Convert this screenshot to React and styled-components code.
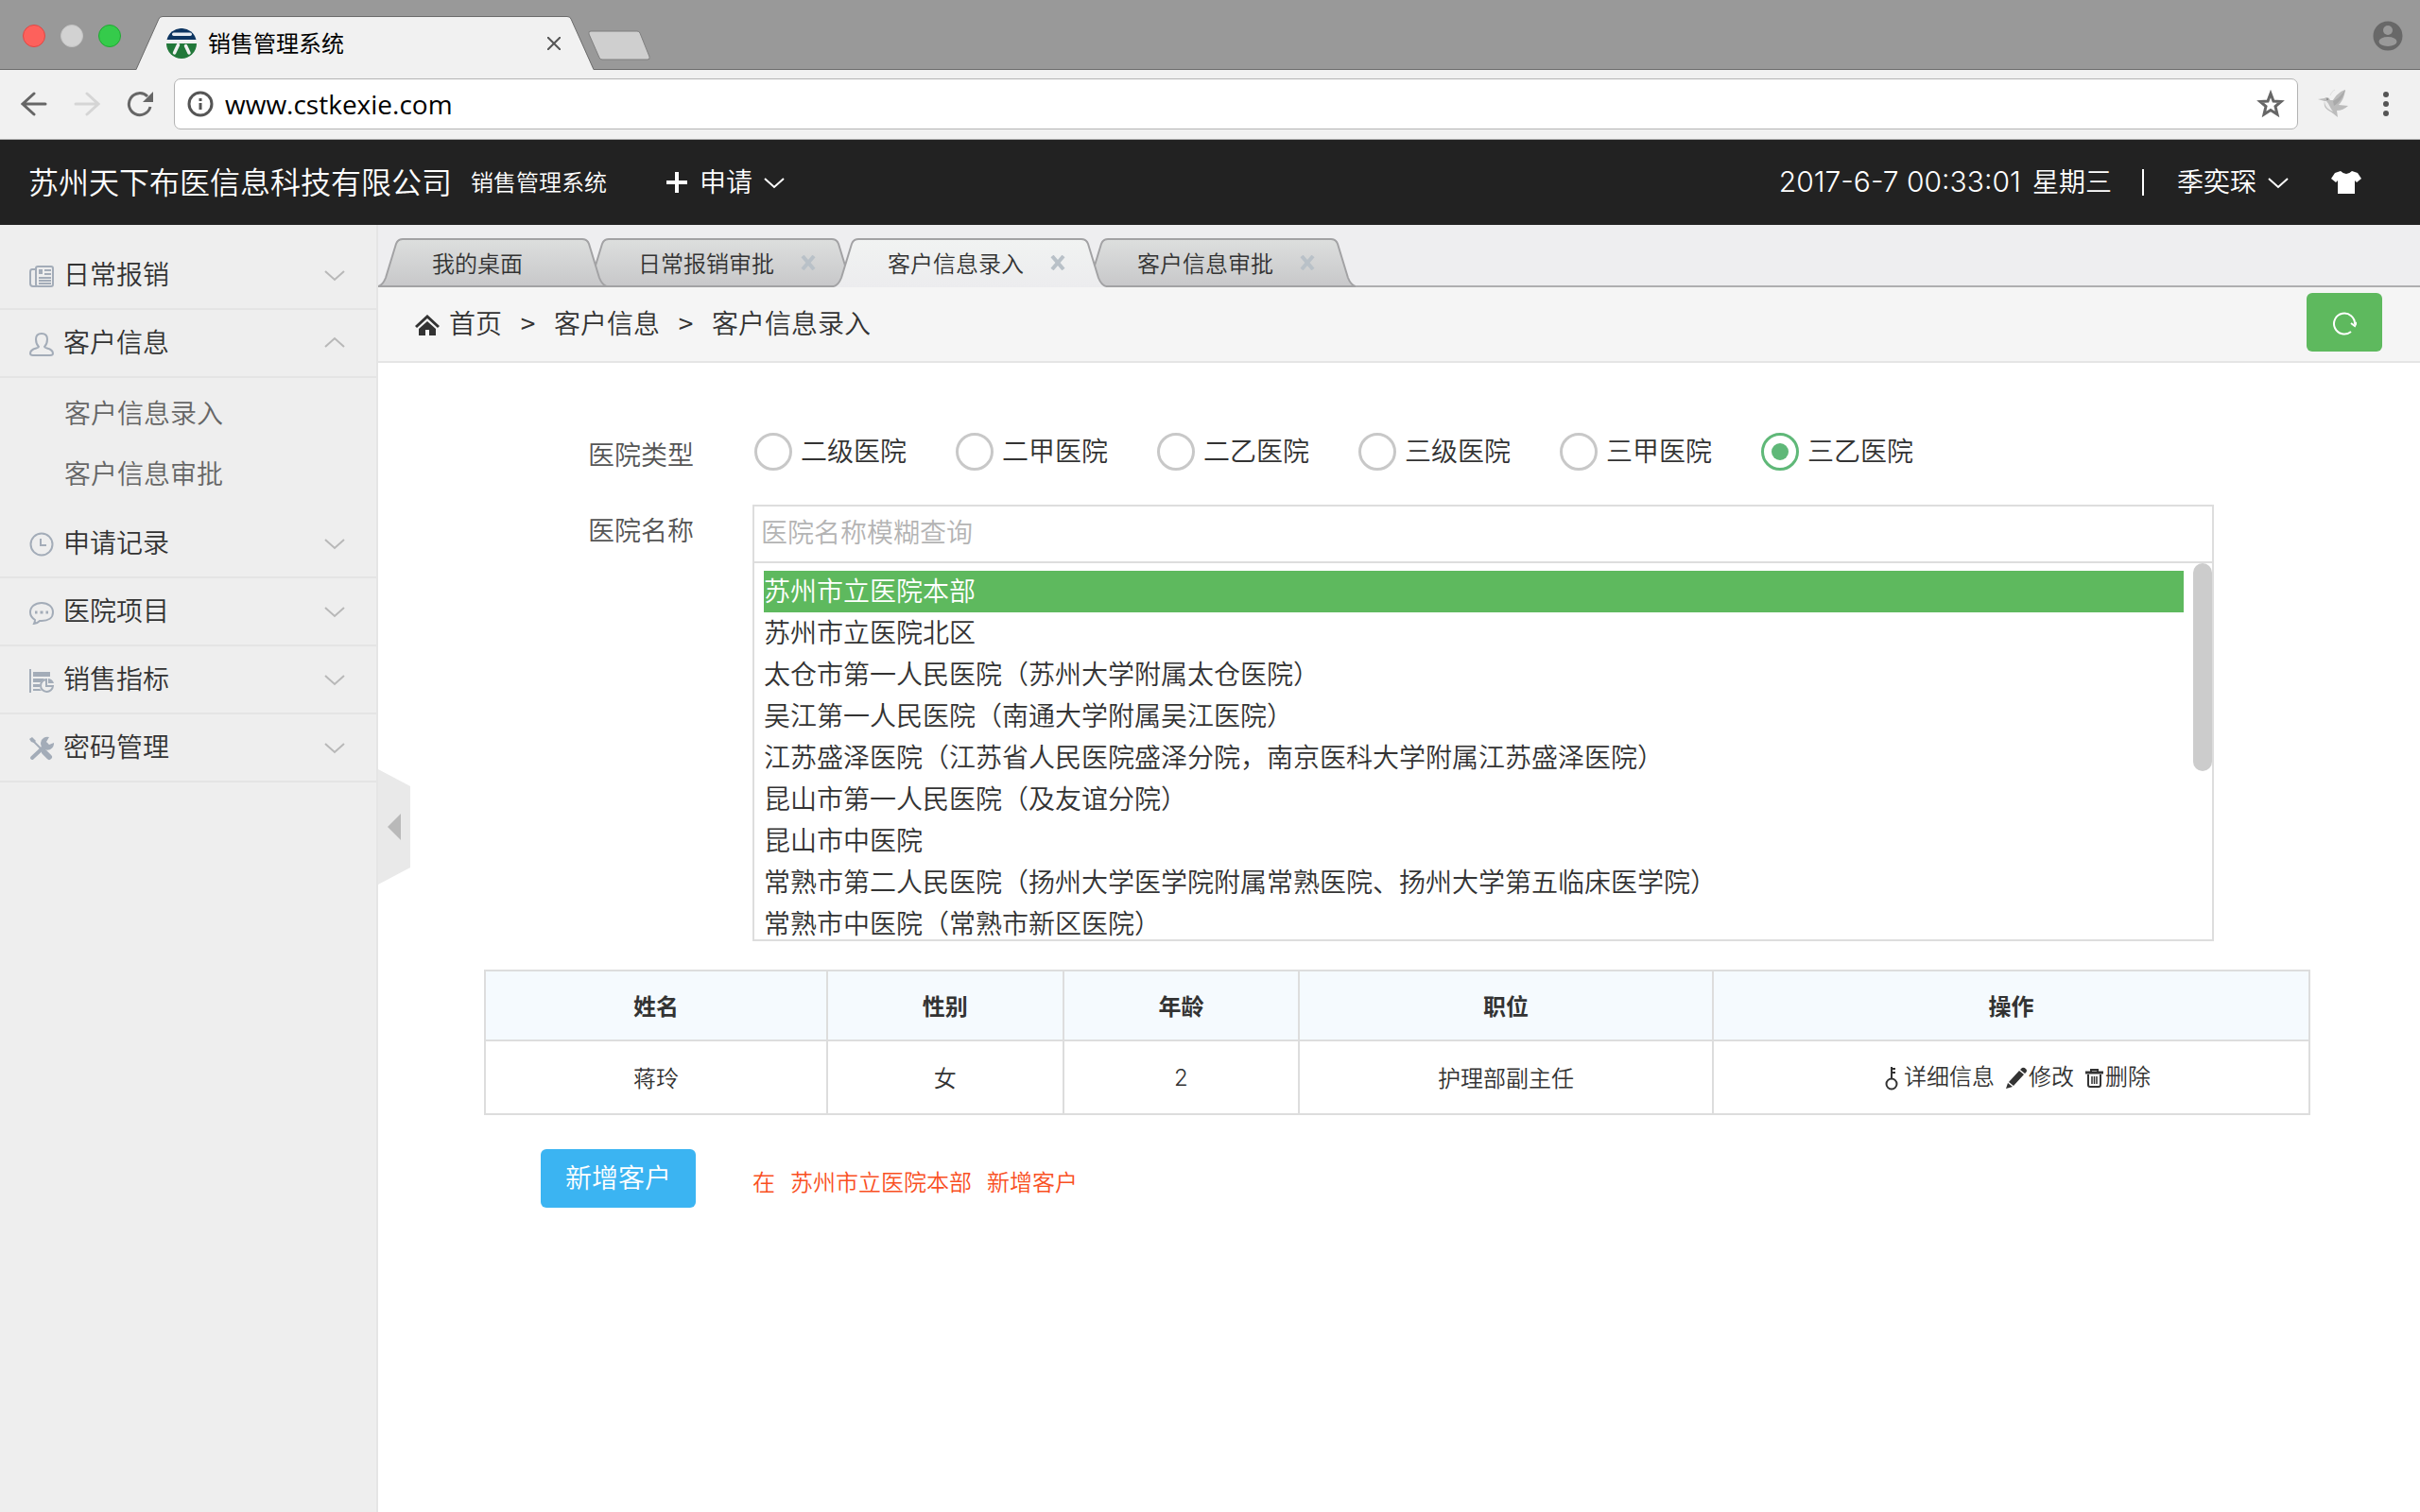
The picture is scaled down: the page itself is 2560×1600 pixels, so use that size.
import React, { useState } from "react";
import styled, { createGlobalStyle, css } from "styled-components";

const GlobalStyle = createGlobalStyle`
    * {
        box-sizing: border-box;
    }

    body {
        margin: 0;
        background: #ffffff;
        color: #333333;
        font-family: "Noto Sans CJK SC", sans-serif;
        font-size: 28px;
        font-weight: 350;
        line-height: 40px;
    }

    button, input {
        margin: 0;
        padding: 0;
        border: 0;
        background: none;
        color: inherit;
        font: inherit;
    }

    svg {
        display: block;
        flex: none;
    }
`;

/* ---------- browser window ---------- */

const TitleBar = styled.div`
    display: flex;
    align-items: flex-end;
    height: 74px;
    padding-left: 24px;
    background: #999999;
    box-shadow: inset 0 -1px 0 #6c6c6c;
`;

const Lights = styled.div`
    display: flex;
    gap: 16px;
    padding-bottom: 24px;
`;

const Light = styled.span`
    width: 24px;
    height: 24px;
    border: 1px solid ${props => props.$edge};
    border-radius: 50%;
    background: ${props => props.$fill};
`;

const BrowserTab = styled.div`
    position: relative;
    display: flex;
    align-items: center;
    width: 484px;
    height: 57px;
    margin-left: 16px;
    padding: 0 35px 0 32px;
    color: #000000;
    font-size: 24px;
    font-weight: 400;
    isolation: isolate;
`;

const TabBackground = styled.svg`
    position: absolute;
    top: 0;
    left: 0;
    z-index: -1;
`;

const BrowserTabTitle = styled.span`
    flex: 1;
    margin-left: 12px;
    padding-bottom: 2px;
`;

const NewTab = styled.button`
    margin-left: -6px;
    padding-bottom: 10px;
`;

const Profile = styled.button`
    margin: 0 18px 20px auto;
`;

const ToolBar = styled.div`
    display: flex;
    align-items: center;
    height: 74px;
    padding: 0 33px 1px 22px;
    border-bottom: 1px solid #a8a8a8;
    background: #f1f1f1;
`;

const NavButton = styled.button`
    margin-right: 28px;
    color: ${props => props.disabled ? "#d5d5d5" : "#666666"};
`;

const AddressBar = styled.div`
    display: flex;
    flex: 1;
    align-items: center;
    height: 54px;
    margin-left: -6px;
    padding: 0 13px;
    border: 1px solid #b3b3b3;
    border-radius: 7px;
    background: #ffffff;
`;

const AddressInput = styled.input`
    flex: 1;
    margin-left: 12px;
    outline: none;
    color: #000000;
    font-family: "Open Sans", sans-serif;
    font-weight: 400;
`;

const BirdButton = styled.button`
    margin: 0 36px 0 20px;
`;

/* ---------- application header ---------- */

const Header = styled.header`
    display: flex;
    align-items: center;
    height: 90px;
    padding: 0 62px 0 30px;
    background: #222222;
    color: #ffffff;
`;

const Company = styled.h1`
    margin: 0;
    padding-bottom: 4px;
    font-size: 32px;
    font-weight: inherit;
`;

const SystemName = styled.span`
    margin-left: 20px;
    padding-bottom: 2px;
    font-size: 24px;
`;

/* lifts a line of text to the optical middle of the icons beside it */
const Caption = styled.span`
    padding-bottom: 4px;
`;

const HeaderButton = styled.button`
    display: flex;
    align-items: center;
    gap: 12px;
`;

const ApplyButton = styled(HeaderButton)`
    margin-left: 62px;
`;

const Clock = styled.time`
    margin-left: auto;
    padding-bottom: 4px;
`;

const Digits = styled.span`
    margin-right: ${props => props.$gap || 0}px;
    font-family: Inter, sans-serif;
    font-size: ${props => props.$size}px;
`;

const Divider = styled.span`
    width: 2px;
    height: 28px;
    margin: 0 35px 0 32px;
    background: #ffffff;
`;

const SkinButton = styled.button`
    margin-left: 45px;
`;

/* ---------- sidebar ---------- */

const Body = styled.div`
    position: relative;
    display: flex;
    min-height: calc(100vh - 238px);
`;

const Sidebar = styled.nav`
    flex: none;
    width: 400px;
    padding-top: 18px;
    border-right: 2px solid #e5e5e5;
    background: #eeeeee;
`;

const MenuTitle = styled.button`
    display: flex;
    align-items: center;
    width: 100%;
    height: 72px;
    padding: 0 33px 0 31px;
    border-bottom: 2px solid #e4e4e4;
    text-align: left;
`;

const MenuIcon = styled.span`
    padding-top: 2px;
    color: #a3acb8;
`;

const MenuText = styled(Caption)`
    flex: 1;
    margin-left: 10px;
`;

const SubMenu = styled.ul`
    margin: 0;
    padding: 4px 0 8px;
    list-style: none;
`;

const SubLink = styled.a`
    display: block;
    padding-left: 68px;
    color: #666666;
    line-height: 64px;
    text-decoration: none;
`;

const Collapse = styled.button`
    position: absolute;
    top: 576px;
    left: 400px;
`;

/* ---------- page tabs and breadcrumb ---------- */

const Main = styled.main`
    flex: 1;
    min-width: 0;
`;

const TabStrip = styled.div`
    display: flex;
    align-items: flex-end;
    height: 66px;
    border-bottom: 2px solid #aeaeb0;
    background: #eeeef0;
`;

const PageTab = styled.div`
    position: relative;
    z-index: ${props => props.$level};
    display: flex;
    align-items: center;
    gap: 28px;
    width: ${props => props.$width}px;
    height: 52px;
    margin: 0 -24px -2px 0;
    padding-left: 57px;
    isolation: isolate;
`;

const PageTabLabel = styled.button`
    font-size: 24px;
`;

const Crumbs = styled.div`
    display: flex;
    align-items: center;
    height: 80px;
    padding: 0 40px 4px 39px;
    border-bottom: 2px solid #e5e5e5;
    background: #f5f5f5;
`;

const CrumbLink = styled.a`
    display: flex;
    align-items: center;
    gap: 10px;
    color: inherit;
    text-decoration: none;
`;

const CrumbIcon = styled.span`
    padding-top: 6px;
`;

const Arrow = styled.span`
    width: 55px;
    font-weight: 400;
    text-align: center;
`;

const Refresh = styled.button`
    display: flex;
    align-items: center;
    justify-content: center;
    width: 80px;
    height: 62px;
    margin-left: auto;
    padding-top: 4px;
    border-radius: 6px;
    background: #5eb95e;
    color: #ffffff;
`;

/* ---------- form ---------- */

const Content = styled.div`
    padding: 70px 116px 0 112px;
`;

const Field = styled.div`
    display: grid;
    grid-template-columns: 224px minmax(0, 1fr);
    column-gap: 60px;
    margin: 0 102px ${props => props.$gap}px 0;
`;

const FieldLabel = styled.label`
    padding: 6px 2px 0 0;
    color: #555555;
    text-align: right;
`;

const RadioGroup = styled.div`
    display: flex;
    align-items: center;
    height: 48px;
    padding-left: 2px;
`;

const RadioLabel = styled.label`
    display: flex;
    align-items: center;
    gap: 9px;
    margin-right: 52px;
`;

const Radio = styled.input`
    appearance: none;
    display: grid;
    place-content: center;
    width: 40px;
    height: 40px;
    border: 3px solid #c8c8c8;
    border-radius: 50%;

    &:checked {
        border-color: #5fb878;
    }

    &:checked::before {
        content: "";
        width: 18px;
        height: 18px;
        border-radius: 50%;
        background: #5fb878;
    }
`;

const Picker = styled.div`
    border: 2px solid #dddddd;
`;

const SearchInput = styled.input`
    display: block;
    width: 100%;
    height: 60px;
    padding: 0 7px 6px;
    border-bottom: 2px solid #dddddd;
    outline: none;

    &::placeholder {
        color: #b4b4b4;
        opacity: 1;
    }
`;

const ListFrame = styled.div`
    position: relative;
    height: 398px;
    overflow: hidden;
`;

const List = styled.ul`
    margin: 0;
    padding: 8px 30px 8px 10px;
    list-style: none;
`;

const Option = styled.li`
    padding-bottom: 4px;
    cursor: pointer;

    ${props => props["aria-selected"] && css`
        background: #5eb95e;
        color: #ffffff;
    `}
`;

const ScrollThumb = styled.span`
    position: absolute;
    top: 0;
    right: 0;
    width: 20px;
    height: 220px;
    border-radius: 10px;
    background: #cccccc;
`;

/* ---------- customer table ---------- */

const Table = styled.table`
    width: 100%;
    margin-bottom: 36px;
    border-collapse: collapse;
    table-layout: fixed;
    font-size: 24px;
    text-align: center;
`;

const Th = styled.th`
    width: ${props => props.$width};
    height: 74px;
    padding: 0;
    border: 2px solid #dddddd;
    background: #f5fafe;
    font-weight: 700;
`;

const Td = styled.td`
    height: 78px;
    padding: 0;
    border: 2px solid #dddddd;
`;

const Actions = styled.div`
    display: flex;
    justify-content: center;
    gap: 12px;
    padding: 0 0 4px 10px;
`;

const Action = styled.button`
    display: flex;
    align-items: center;
    gap: 2px;

    svg {
        margin-top: 5px;
    }
`;

const AddButton = styled.button`
    justify-self: end;
    width: 164px;
    height: 62px;
    padding-bottom: 4px;
    border-radius: 6px;
    background: #3bb4f2;
    color: #ffffff;
`;

const Hint = styled.p`
    display: flex;
    align-items: center;
    gap: 16px;
    margin: 0;
    padding-top: 6px;
    color: #f9501f;
    font-size: 24px;
`;

/* ---------- icons ---------- */

const Icon = ({ w, h, sw = 2, children }) => (
    <svg width={w} height={h} viewBox={`0 0 ${w} ${h}`} fill="none" stroke="currentColor" strokeWidth={sw} aria-hidden="true">
        {children}
    </svg>
);

const Chevron = ({ up, color = "currentColor" }) => (
    <svg width="22" height="14" viewBox="0 0 22 14" fill="none" stroke={color} strokeWidth="2" aria-hidden="true">
        <path d={up ? "M1 11 11 2 21 11" : "M1 3 11 12 21 3"} />
    </svg>
);

const Logo = () => (
    <svg width="32" height="32" viewBox="0 0 32 32" aria-hidden="true">
        <path d="M0.5 12A16 16 0 0 1 31.5 12Z" fill="#0d3561" />
        <path d="M0 16H32A16 16 0 0 1 0 16Z" fill="#22783a" />
        <rect x="6" y="4.500" width="21" height="3.500" rx="1.700" fill="#e8edf2" />
        <path d="M12.500 17.500 8.500 26M20.500 18.500 24 26" stroke="#f1f1f1" strokeWidth="3.500" strokeLinecap="round" />
    </svg>
);

const Bird = () => (
    <svg width="34" height="34" viewBox="0 0 34 34" aria-hidden="true">
        <path d="M1 12 8 11C10 9 13 10 14 13L17 13C20 8 24 4 30 2C29 9 27 14 23 18L33 19C30 22 25 24 21 24L22 31C18 28 16 26 14 25C8 22 7 18 8 14Z" fill="#bcbcbc" />
        <path d="M8 14C8 20 12 23 17 25C13 20 13 17 10 14Z" fill="#ececec" />
        <path d="M17 14C22 12 26 7 30 2C28 9 24 15 18 19Z" fill="#a9a9a9" />
        <path d="M14 8C15 5 17 3 19 2" fill="none" stroke="#dddddd" />
        <circle cx="11" cy="12" r="1" fill="#888888" />
    </svg>
);

const NewsIcon = () => (
    <Icon w={26} h={26}>
        <rect x="7" y="3" width="18" height="21" rx="2" />
        <path d="M7 6H3Q1 6 1 9V21Q1 24 4 24H8M16 7H23M16 11H23M10 15H23M10 18H23M10 21H23" />
        <path d="M10 6H14V11H10Z" fill="currentColor" stroke="none" />
    </Icon>
);

const UserIcon = () => (
    <Icon w={26} h={26}>
        <path d="M10 16C8 14 7 11 7 8C7 4 9 2 13 2S19 4 19 8C19 11 18 14 16 16C16 18 25 17 25 23Q25 25 22 25H4Q1 25 1 23C1 17 10 18 10 16Z" />
    </Icon>
);

const ClockIcon = () => (
    <Icon w={26} h={26}>
        <circle cx="13" cy="13" r="11.500" />
        <path d="M12 7V14H18" />
    </Icon>
);

const ChatIcon = () => (
    <Icon w={26} h={26}>
        <path d="M6 21C3 19 1 16 1 13C1 7 6 3 13 3S25 7 25 13S20 22 13 22H11C9 24 7 25 5 25Q6 23 6 21Z" />
        <path d="M6 13H8.500M11.500 13H14.500M17.500 13H20" strokeWidth="3" />
    </Icon>
);

const ReportIcon = () => (
    <Icon w={26} h={26}>
        <path d="M1 1V26" />
        <path d="M4 4H22V9H4ZM4 11H16L12 15H4ZM4 17H11V20H4ZM4 22H11L13 24H4Z" fill="currentColor" stroke="none" />
        <path d="M18 12A6.500 6.500 0 1 0 25 19H18Z" />
        <path d="M20 11A7 7 0 0 1 26 16H20Z" fill="currentColor" stroke="none" />
    </Icon>
);

const ToolsIcon = () => (
    <Icon w={26} h={26} sw={4}>
        <path d="M3 23 18 9" strokeLinecap="round" />
        <path d="M3 4 13 14" strokeWidth="2" />
        <path d="M16 17 21 22" strokeWidth="6" strokeLinecap="round" />
        <path d="M21 1A7 7 0 1 0 26 7L21 9 18 6Z" fill="currentColor" stroke="none" />
        <path d="M0 3 3 1 7 5 5 7 2 6Z" fill="currentColor" stroke="none" />
    </Icon>
);

const HomeIcon = () => (
    <Icon w={26} h={22} sw={3}>
        <path d="M1 13 13 2 25 13" />
        <path d="M4 15 13 7 22 15V22H15V16H11V22H4Z" fill="currentColor" stroke="none" />
    </Icon>
);

const KeyIcon = () => (
    <Icon w={22} h={26}>
        <circle cx="11" cy="19" r="5.500" />
        <path d="M11 14V1M11 3H15M11 7H15" />
    </Icon>
);

const PencilIcon = () => (
    <svg width="22" height="24" viewBox="0 0 22 24" fill="currentColor" aria-hidden="true">
        <path d="M14 4 19 8 8 20 3 16ZM15 3 17 1Q19 0 21 2T21 6L20 7ZM2 17 7 21 0 23Z" />
    </svg>
);

const TrashIcon = () => (
    <Icon w={19} h={20}>
        <path d="M0 4H19" strokeWidth="3" />
        <path d="M6 4V1H13V4M3 6V17Q3 19 5 19H14Q16 19 16 17V6" />
        <path d="M7 8V16M9.500 8V16M12 8V16" strokeWidth="1.500" />
    </Icon>
);

const CloseIcon = () => (
    <Icon w={16} h={16} sw={4}>
        <path d="M2 1 14 15M14 1 2 15" stroke="#b9c1c8" />
    </Icon>
);

/* ---------- data ---------- */

const menus = [
    { title: "日常报销", icon: <NewsIcon /> },
    { title: "客户信息", icon: <UserIcon />, children: ["客户信息录入", "客户信息审批"] },
    { title: "申请记录", icon: <ClockIcon /> },
    { title: "医院项目", icon: <ChatIcon /> },
    { title: "销售指标", icon: <ReportIcon /> },
    { title: "密码管理", icon: <ToolsIcon /> },
];

const pageTabs = [
    { title: "我的桌面", width: 242 },
    { title: "日常报销审批", width: 288, closable: true },
    { title: "客户信息录入", width: 288, closable: true, active: true },
    { title: "客户信息审批", width: 288, closable: true },
];

const hospitalTypes = ["二级医院", "二甲医院", "二乙医院", "三级医院", "三甲医院", "三乙医院"];

const hospitals = [
    "苏州市立医院本部",
    "苏州市立医院北区",
    "太仓市第一人民医院（苏州大学附属太仓医院）",
    "吴江第一人民医院（南通大学附属吴江医院）",
    "江苏盛泽医院（江苏省人民医院盛泽分院，南京医科大学附属江苏盛泽医院）",
    "昆山市第一人民医院（及友谊分院）",
    "昆山市中医院",
    "常熟市第二人民医院（扬州大学医学院附属常熟医院、扬州大学第五临床医学院）",
    "常熟市中医院（常熟市新区医院）",
];

const customers = [
    { name: "蒋玲", sex: "女", age: 2, job: "护理部副主任" },
];

/* ---------- sections ---------- */

const Browser = () => (
    <>
        <TitleBar>
            <Lights>
                <Light $fill="#fd615c" $edge="#df4744" />
                <Light $fill="#d2d2d2" $edge="#c4c4c4" />
                <Light $fill="#35cb4b" $edge="#21a833" />
            </Lights>
            <BrowserTab>
                <TabBackground width="484" height="57" viewBox="0 0 484 57">
                    <path d="M0 57 24 3Q25 0.500 28 0.500H456Q459 0.500 460 3L484 57Z" fill="#f1f1f1" />
                    <path d="M0 56.500 24 3Q25 0.500 28 0.500H456Q459 0.500 460 3L484 56.500" fill="none" stroke="#6c6c6c" />
                </TabBackground>
                <Logo />
                <BrowserTabTitle>销售管理系统</BrowserTabTitle>
                <button aria-label="关闭">
                    <Icon w={14} h={14}><path d="M0 0 14 14M14 0 0 14" stroke="#555555" /></Icon>
                </button>
            </BrowserTab>
            <NewTab aria-label="新标签页">
                <Icon w={66} h={32} sw={1}>
                    <path d="M3 1H52Q54 1 55 3L65 28Q66 31 63 31H15Q13 31 12 29L1 4Q0 1 3 1Z" fill="#cfcfcf" stroke="#7f7f7f" />
                </Icon>
            </NewTab>
            <Profile aria-label="用户">
                <svg width="32" height="32" viewBox="0 0 32 32" aria-hidden="true">
                    <circle cx="16" cy="16" r="15.500" fill="#686868" />
                    <circle cx="16" cy="10" r="5" fill="#999999" />
                    <ellipse cx="16" cy="22" rx="9.500" ry="5" fill="#999999" />
                </svg>
            </Profile>
        </TitleBar>
        <ToolBar>
            <NavButton aria-label="后退">
                <Icon w={28} h={26} sw={3}><path d="M14 2 2 13 14 24M2 13H26" strokeLinecap="round" /></Icon>
            </NavButton>
            <NavButton aria-label="前进" disabled>
                <Icon w={28} h={26} sw={3}><path d="M14 2 26 13 14 24M26 13H2" strokeLinecap="round" /></Icon>
            </NavButton>
            <NavButton aria-label="刷新">
                <Icon w={28} h={28} sw={3}>
                    <path d="M22 6A11.500 11.500 0 1 0 25 17" />
                    <path d="M28 1V12H17Z" fill="currentColor" stroke="none" />
                </Icon>
            </NavButton>
            <AddressBar>
                <Icon w={28} h={28} sw={3}>
                    <circle cx="14" cy="14" r="12" stroke="#555555" />
                    <path d="M14 13V20M14 8V11" stroke="#555555" />
                </Icon>
                <AddressInput aria-label="地址" defaultValue="www.cstkexie.com" />
                <button aria-label="收藏">
                    <svg width="30" height="30" viewBox="0 0 30 30" fill="none" stroke="#666666" strokeWidth="3" aria-hidden="true">
                        <path d="M15 4 18 12 26 12.500 20 17.500 22 26 15 21.500 8 26 10 17.500 4 12.500 12 12Z" />
                    </svg>
                </button>
            </AddressBar>
            <BirdButton aria-label="扩展程序"><Bird /></BirdButton>
            <button aria-label="菜单">
                <svg width="6" height="28" viewBox="0 0 6 28" fill="#555555" aria-hidden="true">
                    <circle cx="3" cy="4" r="3" />
                    <circle cx="3" cy="14" r="3" />
                    <circle cx="3" cy="24" r="3" />
                </svg>
            </button>
        </ToolBar>
    </>
);

const AppHeader = () => (
    <Header>
        <Company>苏州天下布医信息科技有限公司</Company>
        <SystemName>销售管理系统</SystemName>
        <ApplyButton>
            <Icon w={24} h={24} sw={4}><path d="M12 1V23M1 12H23" /></Icon>
            <Caption>申请</Caption>
            <Chevron />
        </ApplyButton>
        <Clock><Digits $size={30} $gap={6}>2017-6-7 00:33:01</Digits> 星期三</Clock>
        <Divider />
        <HeaderButton><Caption>季奕琛</Caption><Chevron /></HeaderButton>
        <SkinButton aria-label="换肤">
            <svg width="32" height="24" viewBox="0 0 32 24" fill="#ffffff" aria-hidden="true">
                <path d="M10 0Q16 6 22 0L28 2 32 8 27 12 25 10V24H7V10L5 12 0 8 4 2Z" />
            </svg>
        </SkinButton>
    </Header>
);

const SideMenu = () => (
    <Sidebar>
        {menus.map(({ title, icon, children }) => (
            <React.Fragment key={title}>
                <MenuTitle aria-expanded={Boolean(children)}>
                    <MenuIcon>{icon}</MenuIcon>
                    <MenuText>{title}</MenuText>
                    <Chevron up={Boolean(children)} color="#b8b8b8" />
                </MenuTitle>
                {children && (
                    <SubMenu>
                        {children.map(child => (
                            <li key={child}><SubLink href="#">{child}</SubLink></li>
                        ))}
                    </SubMenu>
                )}
            </React.Fragment>
        ))}
    </Sidebar>
);

const PageTabShape = ({ width: w, active }) => {
    const outline = `M0 51C4 50 6 47 8 42L19 6Q21 1 26 1H${w - 26}Q${w - 21} 1 ${w - 19} 6L${w - 8} 42C${w - 6} 47 ${w - 4} 50 ${w} 51`;
    const id = active ? "tab-active" : "tab-normal";
    return (
        <TabBackground width={w} height="52" viewBox={`0 0 ${w} 52`} aria-hidden="true">
            <defs>
                <linearGradient id={id} x1="0" y1="0" x2="0" y2="1">
                    <stop offset="0" stopColor={active ? "#f1f3f2" : "#dddfde"} />
                    <stop offset="1" stopColor={active ? "#ececee" : "#c7c7c9"} />
                </linearGradient>
            </defs>
            <path d={`${outline}V52H0Z`} fill={`url(#${id})`} />
            <path d={outline} fill="none" stroke="#a2a2a4" strokeWidth="2" />
            {!active && <path d={`M0 51H${w}`} stroke="#a2a2a4" strokeWidth="2" />}
        </TabBackground>
    );
};

const PageTabs = () => (
    <TabStrip>
        {pageTabs.map(({ title, width, closable, active }, index) => (
            <PageTab key={title} $width={width} $level={active ? 9 : 5 - index}>
                <PageTabShape width={width} active={active} />
                <PageTabLabel>{title}</PageTabLabel>
                {closable && <button aria-label="关闭"><CloseIcon /></button>}
            </PageTab>
        ))}
    </TabStrip>
);

const Breadcrumb = () => (
    <Crumbs>
        <CrumbLink href="#"><CrumbIcon><HomeIcon /></CrumbIcon>首页</CrumbLink>
        <Arrow>&gt;</Arrow>
        <CrumbLink href="#">客户信息</CrumbLink>
        <Arrow>&gt;</Arrow>
        <span>客户信息录入</span>
        <Refresh aria-label="刷新">
            <Icon w={26} h={26}>
                <path d="M20 21A11 11 0 1 1 24 13" />
                <path d="M20 12 24 15 26 11" />
            </Icon>
        </Refresh>
    </Crumbs>
);

const CustomerTable = () => (
    <Table>
        <thead>
            <tr>
                <Th $width="18.750%">姓名</Th>
                <Th $width="12.940%">性别</Th>
                <Th $width="12.940%">年龄</Th>
                <Th $width="22.670%">职位</Th>
                <Th>操作</Th>
            </tr>
        </thead>
        <tbody>
            {customers.map(({ name, sex, age, job }) => (
                <tr key={name}>
                    <Td>{name}</Td>
                    <Td>{sex}</Td>
                    <Td><Digits $size={24}>{age}</Digits></Td>
                    <Td>{job}</Td>
                    <Td>
                        <Actions>
                            <Action><KeyIcon />详细信息</Action>
                            <Action><PencilIcon />修改</Action>
                            <Action><TrashIcon />删除</Action>
                        </Actions>
                    </Td>
                </tr>
            ))}
        </tbody>
    </Table>
);

export default function App() {
    const [type, setType] = useState("三乙医院");
    const [hospital, setHospital] = useState(hospitals[0]);

    return (
        <>
            <GlobalStyle />
            <Browser />
            <AppHeader />
            <Body>
                <SideMenu />
                <Main>
                    <PageTabs />
                    <Breadcrumb />
                    <Content>
                        <Field $gap={32}>
                            <FieldLabel as="span" id="type-label">医院类型</FieldLabel>
                            <RadioGroup role="radiogroup" aria-labelledby="type-label">
                                {hospitalTypes.map(item => (
                                    <RadioLabel key={item}>
                                        <Radio type="radio" name="type" checked={type === item} onChange={() => setType(item)} />
                                        <Caption>{item}</Caption>
                                    </RadioLabel>
                                ))}
                            </RadioGroup>
                        </Field>
                        <Field $gap={30}>
                            <FieldLabel htmlFor="hospital">医院名称</FieldLabel>
                            <Picker>
                                <SearchInput id="hospital" placeholder="医院名称模糊查询" />
                                <ListFrame>
                                    <List role="listbox" aria-label="医院名称">
                                        {hospitals.map(item => (
                                            <Option key={item} role="option" aria-selected={hospital === item} onClick={() => setHospital(item)}>
                                                {item}
                                            </Option>
                                        ))}
                                    </List>
                                    <ScrollThumb />
                                </ListFrame>
                            </Picker>
                        </Field>
                        <CustomerTable />
                        <Field $gap={0}>
                            <AddButton>新增客户</AddButton>
                            <Hint><span>在</span><span>{hospital}</span><span>新增客户</span></Hint>
                        </Field>
                    </Content>
                </Main>
                <Collapse aria-label="收起菜单">
                    <svg width="34" height="122" viewBox="0 0 34 122" aria-hidden="true">
                        <path d="M0 0 34 18V104L0 122Z" fill="#e9e9e9" />
                        <path d="M10 61 24 47V75Z" fill="#b9b9b9" />
                    </svg>
                </Collapse>
            </Body>
        </>
    );
}
